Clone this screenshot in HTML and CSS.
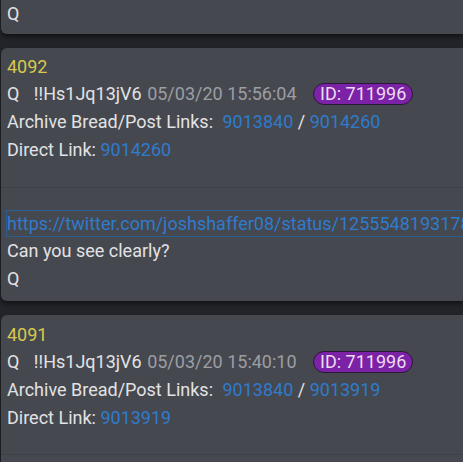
FILE: index.html
```html
<!DOCTYPE html>
<html>
<head>
<meta charset="utf-8">
<link rel="stylesheet" href="styles.css">
</head>
<body>
<div class="feed">
  <div class="card card-top">
    <div class="line">Q</div>
  </div>
  <div class="card">
    <div class="num">4092</div>
    <div class="line">Q <span class="trip">!!Hs1Jq13jV6</span> <span class="date">05/03/20 15:56:04</span> <span class="badge">ID: 711996</span></div>
    <div class="line">Archive Bread/Post Links: <a class="lnk first">9013840</a> / <a class="lnk">9014260</a></div>
    <div class="line">Direct Link: <a class="lnk">9014260</a></div>
    <div class="sep"></div>
    <div class="line"><a class="lnk url">https://twitter.com/joshshaffer08/status/1255548193178</a></div>
    <div class="line">Can you see clearly?</div>
    <div class="line">Q</div>
  </div>
  <div class="card card-last">
    <div class="num">4091</div>
    <div class="line">Q <span class="trip">!!Hs1Jq13jV6</span> <span class="date">05/03/20 15:40:10</span> <span class="badge">ID: 711996</span></div>
    <div class="line">Archive Bread/Post Links: <a class="lnk first">9013840</a> / <a class="lnk">9013919</a></div>
    <div class="line">Direct Link: <a class="lnk">9013919</a></div>
    <div class="sep"></div>
  </div>
</div>
</body>
</html>
```
FILE: styles.css
```css
html, body {
  margin: 0;
  padding: 0;
  background: #222429;
  overflow: hidden;
}
body {
  width: 463px;
  height: 462px;
  font-family: Roboto, "Noto Sans", sans-serif;
  font-size: 18px;
  font-weight: 400;
  color: #e2e2e4;
}
.feed {
  display: flex;
  flex-direction: column;
  gap: 14px;
  margin-top: -6px;
  padding-left: 1px;
}
.card {
  background: #46484f;
  border-radius: 6px 0 0 6px;
  padding: 6px 0 8px 6px;
  white-space: nowrap;
  overflow: hidden;
  box-shadow: 0 3px 4px rgba(0,0,0,0.45);
}
.card-top {
  padding-top: 6px;
  padding-bottom: 6px;
}
.card-last {
  padding-bottom: 40px;
}
.num {
  color: #d9c84e;
  line-height: 27.7px;
  margin-top: -1px;
}
.line {
  line-height: 27.7px;
}
.trip {
  margin-left: 10px;
}
.date {
  color: #9c9ea4;
  margin-left: 1px;
}
.badge {
  display: inline-block;
  background: #7b22a6;
  color: #ecdcf2;
  border: 1.5px solid #2a1838;
  border-radius: 11px;
  padding: 0 6px;
  line-height: 20px;
  margin-left: 12px;
}
.lnk {
  color: #2f7bcc;
  text-decoration: none;
}
.first {
  margin-left: 5px;
}
.url {
  display: inline-block;
  outline: 1px solid #2a5e94;
  line-height: 25px;
  margin-top: 1px;
}
.sep {
  height: 1px;
  background: #3f4148;
  margin: 23px 0 22px -6px;
}
.card-last .num {
  margin-top: 0;
}
```
